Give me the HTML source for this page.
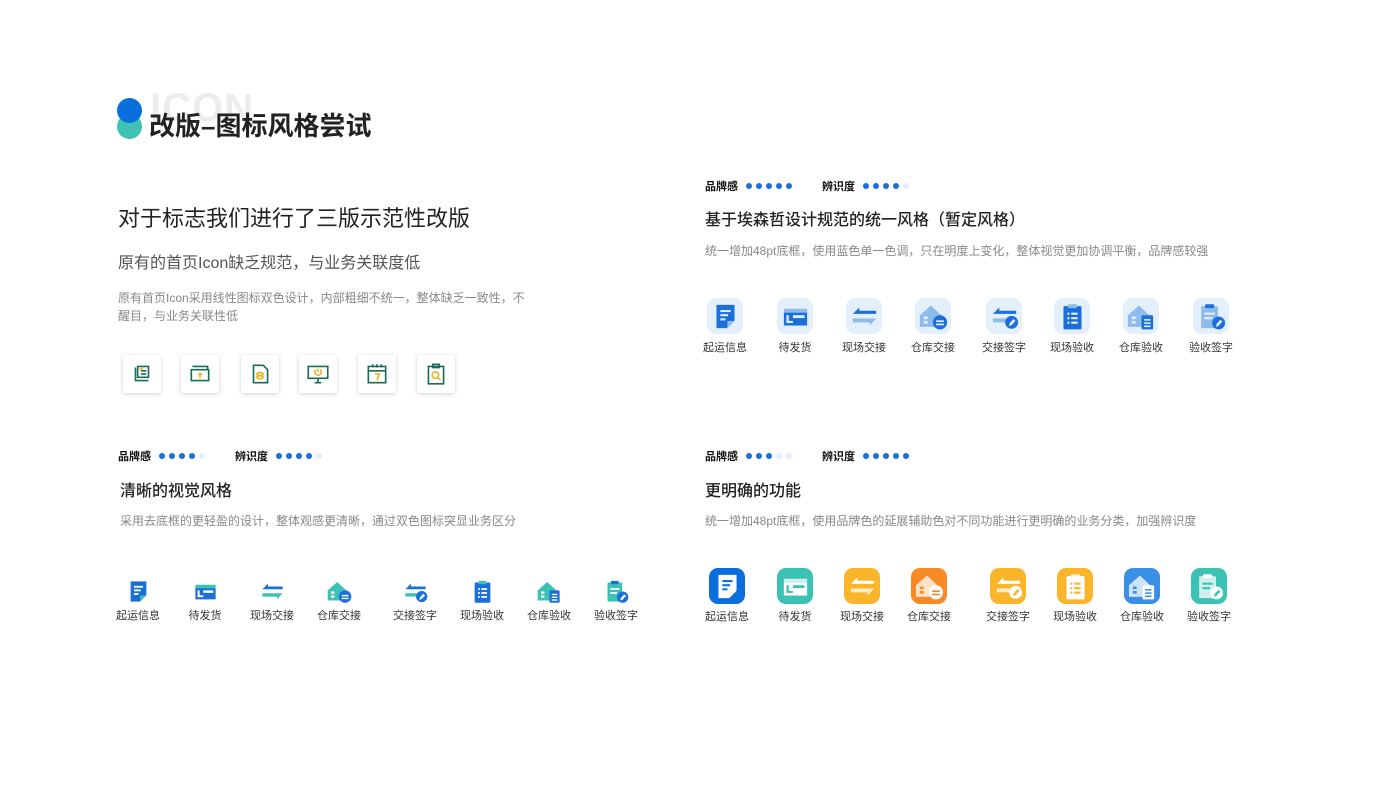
<!DOCTYPE html>
<html><head><meta charset="utf-8"><style>
*{margin:0;padding:0;box-sizing:border-box}
body{width:1400px;height:788px;background:#fff;position:relative;overflow:hidden;font-family:"Liberation Sans","Noto Sans CJK SC",sans-serif;color:#222}
.a{position:absolute;white-space:nowrap}
.p{fill:var(--p)}.s{fill:var(--s)}.w{fill:var(--w)}
.rate{font-size:11px;font-weight:bold;color:#111}
.dots{display:inline-block;vertical-align:middle;margin-left:8px;margin-top:-3px}
.dots i{display:inline-block;width:6px;height:6px;border-radius:50%;background:#1a6fd8;margin-right:4px}
.dots i.o{background:#e3eefa}
.h2{font-size:16px;font-weight:500;color:#222}
.desc{font-size:12px;color:#888}
.ic{position:absolute;text-align:center;width:70px;font-size:11px;color:#333}
.ic .bx{margin:0 auto;border-radius:9px;display:flex;align-items:center;justify-content:center}
.t1 .bx{width:36px;height:36px;background:#e3f0fb;--p:#1a6fd8;--s:#8dbbec;--w:#e3f0fb}
.t1 .bx svg{width:31px;height:31px;flex:none}
.t2 .bx{width:26px;height:26px;--p:#1a6fd8;--s:#3cc2b4;--w:#fff}
.t2 .bx svg{width:27px;height:27px;flex:none}
.t3 .bx{width:36px;height:36px;--p:#fff;--s:rgba(255,255,255,.75)}
.t3 .bx svg{width:31px;height:31px;flex:none}
.old{position:absolute;top:355px;width:38px;height:38px;background:#fff;box-shadow:0 1px 4px rgba(0,0,0,.18);border-radius:2px;display:flex;align-items:center;justify-content:center}
.old svg{width:26px;height:26px;fill:none;stroke:#1b6b5a;stroke-width:1.5}
</style></head><body>

<div class="a" style="left:150px;top:88px;font-size:40px;color:#ececec;font-weight:bold;letter-spacing:1px;line-height:40px">ICON</div>
<div class="a" style="left:117px;top:114px;width:25px;height:25px;border-radius:50%;background:#40c2b5"></div>
<div class="a" style="left:117px;top:98px;width:25px;height:25px;border-radius:50%;background:#0a6fdc"></div>
<div class="a" style="left:149px;top:110px;font-size:26px;font-weight:bold;color:#222;line-height:32px">改版–图标风格尝试</div>

<div class="a" style="left:118px;top:204px;font-size:22px;color:#222;line-height:30px">对于标志我们进行了三版示范性改版</div>
<div class="a" style="left:118px;top:253px;font-size:16px;color:#555;line-height:22px">原有的首页Icon缺乏规范，与业务关联度低</div>
<div class="a desc" style="left:118px;top:289px;line-height:18px">原有首页Icon采用线性图标双色设计，内部粗细不统一，整体缺乏一致性，不<br>醒目，与业务关联性低</div>

<div class="old" style="left:123px"><svg viewBox="0 0 24 24"><path d="M6 6v12h12M8 5h10v10H8z"/><path d="M11 9h5M11 12h5" /><path d="M10 7l1 1 2-2" stroke="#e6b821"/></svg></div>
<div class="old" style="left:181px"><svg viewBox="0 0 24 24"><path d="M4 8h16v10H4zM5 5h14v3"/><path d="M12 11v5M10 12h4" stroke="#e6b821"/></svg></div>
<div class="old" style="left:241px"><svg viewBox="0 0 24 24"><path d="M6 4h9l4 4v12H6z"/><ellipse cx="12" cy="12" rx="3" ry="1.3" stroke="#e6b821"/><ellipse cx="12" cy="15" rx="3" ry="1.3" stroke="#e6b821"/></svg></div>
<div class="old" style="left:299px"><svg viewBox="0 0 24 24"><path d="M3 5h18v11H3zM9 20h6M12 16v4"/><path d="M12 7v3M10 8a3 3 0 1 0 4 0" stroke="#e6b821"/></svg></div>
<div class="old" style="left:358px"><svg viewBox="0 0 24 24"><path d="M4 5h16v15H4zM4 9h16M8 3v3M12 3v3M16 3v3"/><path d="M10 12h4l-2 6" stroke="#e6b821"/></svg></div>
<div class="old" style="left:417px"><svg viewBox="0 0 24 24"><path d="M5 5h14v16H5zM9 3h6v3H9z"/><circle cx="11.5" cy="13" r="3" stroke="#e6b821"/><path d="M14 15.5l2 2" stroke="#e6b821"/></svg></div>

<div class="a rate" style="left:705px;top:178px">品牌感<span class="dots"><i></i><i></i><i></i><i></i><i></i></span></div>
<div class="a rate" style="left:822px;top:178px">辨识度<span class="dots"><i></i><i></i><i></i><i></i><i class="o"></i></span></div>
<div class="a h2" style="left:705px;top:206px">基于埃森哲设计规范的统一风格（暂定风格）</div>
<div class="a desc" style="left:705px;top:242px">统一增加48pt底框，使用蓝色单一色调，只在明度上变化，整体视觉更加协调平衡，品牌感较强</div>

<div class="a rate" style="left:118px;top:448px">品牌感<span class="dots"><i></i><i></i><i></i><i></i><i class="o"></i></span></div>
<div class="a rate" style="left:235px;top:448px">辨识度<span class="dots"><i></i><i></i><i></i><i></i><i class="o"></i></span></div>
<div class="a h2" style="left:120px;top:477px">清晰的视觉风格</div>
<div class="a desc" style="left:120px;top:512px">采用去底框的更轻盈的设计，整体观感更清晰，通过双色图标突显业务区分</div>

<div class="a rate" style="left:705px;top:448px">品牌感<span class="dots"><i></i><i></i><i></i><i class="o"></i><i class="o"></i></span></div>
<div class="a rate" style="left:822px;top:448px">辨识度<span class="dots"><i></i><i></i><i></i><i></i><i></i></span></div>
<div class="a h2" style="left:705px;top:477px">更明确的功能</div>
<div class="a desc" style="left:705px;top:512px">统一增加48pt底框，使用品牌色的延展辅助色对不同功能进行更明确的业务分类，加强辨识度</div>

<svg width="0" height="0" style="position:absolute">
<defs>
<g id="i1"><path class="p" d="M5 3h14v12l-6 6H5z"/><path class="s" d="M13.5 21v-5.5H19z"/><rect class="w" x="8" y="7" width="8" height="1.6"/><rect class="w" x="8" y="10.2" width="6" height="1.6"/><rect class="w" x="8" y="13.4" width="4" height="1.6"/></g>
<g id="i2"><rect class="s" x="3" y="6" width="18" height="3"/><rect class="p" x="3" y="9" width="18" height="10"/><rect class="w" x="5" y="11" width="1.8" height="6"/><rect class="w" x="5" y="15.4" width="5" height="1.6"/><rect class="w" x="10" y="11" width="9" height="2.2"/></g>
<g id="i3"><path class="p" d="M3 10L8 5v2.5h13V10z"/><path class="s" d="M3 13.5h18L16 19v-2.5H3z"/></g>
<g id="i4"><path class="s" d="M1.5 11L10 3.5 18 11v9H1.5z"/><rect class="w" x="4.5" y="12" width="3" height="2"/><rect class="w" x="4.5" y="15.5" width="3" height="2"/><circle class="p" cx="17" cy="16.5" r="5.5"/><rect class="w" x="14" y="15" width="6" height="1.3"/><rect class="w" x="14" y="17.5" width="6" height="1.3"/></g>
<g id="i5"><path class="p" d="M3 10L8 5v2.5h13V10z"/><path class="s" d="M3 13.5h10v3H3z"/><circle class="p" cx="17.5" cy="16.5" r="5"/><path class="w" d="M15.5 19.5l.4-2.2 3-3.3 1.6 1.4-3 3.3z"/></g>
<g id="i6"><rect class="p" x="5" y="4" width="14" height="18" rx="1"/><rect class="s" x="8.5" y="2.5" width="7" height="3" rx=".8"/><rect class="w" x="8" y="9" width="1.6" height="1.6"/><rect class="w" x="11" y="9" width="5" height="1.6"/><rect class="w" x="8" y="12.5" width="1.6" height="1.6"/><rect class="w" x="11" y="12.5" width="5" height="1.6"/><rect class="w" x="8" y="16" width="1.6" height="1.6"/><rect class="w" x="11" y="16" width="5" height="1.6"/></g>
<g id="i7"><path class="s" d="M1.5 11L10 3.5 18 11v9H1.5z"/><rect class="w" x="4.5" y="12" width="3" height="2"/><rect class="w" x="4.5" y="15.5" width="3" height="2"/><rect class="p" x="12" y="11" width="9" height="11" rx="1"/><rect class="w" x="14" y="14" width="5" height="1.2"/><rect class="w" x="14" y="16.5" width="5" height="1.2"/><rect class="w" x="14" y="19" width="5" height="1.2"/></g>
<g id="i8"><rect class="s" x="4" y="4" width="13" height="17" rx="1"/><rect class="p" x="7" y="2.5" width="7" height="3" rx=".8"/><rect class="w" x="6.5" y="9" width="8" height="1.6"/><rect class="w" x="6.5" y="12.5" width="6" height="1.6"/><circle class="p" cx="17.5" cy="17" r="5"/><path class="w" d="M15.5 20l.4-2.2 3-3.3 1.6 1.4-3 3.3z"/></g>
</defs></svg>

<div class="ic t1" style="left:690px;top:298px"><div class="bx"><svg viewBox="0 0 24 24"><use href="#i1"/></svg></div><div style="margin-top:5px">起运信息</div></div>
<div class="ic t1" style="left:760px;top:298px"><div class="bx"><svg viewBox="0 0 24 24"><use href="#i2"/></svg></div><div style="margin-top:5px">待发货</div></div>
<div class="ic t1" style="left:829px;top:298px"><div class="bx"><svg viewBox="0 0 24 24"><use href="#i3"/></svg></div><div style="margin-top:5px">现场交接</div></div>
<div class="ic t1" style="left:898px;top:298px"><div class="bx"><svg viewBox="0 0 24 24"><use href="#i4"/></svg></div><div style="margin-top:5px">仓库交接</div></div>
<div class="ic t1" style="left:969px;top:298px"><div class="bx"><svg viewBox="0 0 24 24"><use href="#i5"/></svg></div><div style="margin-top:5px">交接签字</div></div>
<div class="ic t1" style="left:1037px;top:298px"><div class="bx"><svg viewBox="0 0 24 24"><use href="#i6"/></svg></div><div style="margin-top:5px">现场验收</div></div>
<div class="ic t1" style="left:1106px;top:298px"><div class="bx"><svg viewBox="0 0 24 24"><use href="#i7"/></svg></div><div style="margin-top:5px">仓库验收</div></div>
<div class="ic t1" style="left:1176px;top:298px"><div class="bx"><svg viewBox="0 0 24 24"><use href="#i8"/></svg></div><div style="margin-top:5px">验收签字</div></div>

<div class="ic t2" style="left:103px;top:578px"><div class="bx"><svg viewBox="0 0 24 24"><use href="#i1"/></svg></div><div style="margin-top:3px">起运信息</div></div>
<div class="ic t2" style="left:170px;top:578px"><div class="bx"><svg viewBox="0 0 24 24"><use href="#i2"/></svg></div><div style="margin-top:3px">待发货</div></div>
<div class="ic t2" style="left:237px;top:578px"><div class="bx"><svg viewBox="0 0 24 24"><use href="#i3"/></svg></div><div style="margin-top:3px">现场交接</div></div>
<div class="ic t2" style="left:304px;top:578px"><div class="bx"><svg viewBox="0 0 24 24"><use href="#i4"/></svg></div><div style="margin-top:3px">仓库交接</div></div>
<div class="ic t2" style="left:380px;top:578px"><div class="bx"><svg viewBox="0 0 24 24"><use href="#i5"/></svg></div><div style="margin-top:3px">交接签字</div></div>
<div class="ic t2" style="left:447px;top:578px"><div class="bx"><svg viewBox="0 0 24 24"><use href="#i6"/></svg></div><div style="margin-top:3px">现场验收</div></div>
<div class="ic t2" style="left:514px;top:578px"><div class="bx"><svg viewBox="0 0 24 24"><use href="#i7"/></svg></div><div style="margin-top:3px">仓库验收</div></div>
<div class="ic t2" style="left:581px;top:578px"><div class="bx"><svg viewBox="0 0 24 24"><use href="#i8"/></svg></div><div style="margin-top:3px">验收签字</div></div>

<div class="ic t3" style="left:692px;top:568px"><div class="bx" style="background:#0a6fdc;--w:#0a6fdc"><svg viewBox="0 0 24 24"><use href="#i1"/></svg></div><div style="margin-top:4px">起运信息</div></div>
<div class="ic t3" style="left:760px;top:568px"><div class="bx" style="background:#3cc2b4;--w:#3cc2b4"><svg viewBox="0 0 24 24"><use href="#i2"/></svg></div><div style="margin-top:4px">待发货</div></div>
<div class="ic t3" style="left:827px;top:568px"><div class="bx" style="background:#fbb52a;--w:#fbb52a"><svg viewBox="0 0 24 24"><use href="#i3"/></svg></div><div style="margin-top:4px">现场交接</div></div>
<div class="ic t3" style="left:894px;top:568px"><div class="bx" style="background:#f88a26;--w:#f88a26"><svg viewBox="0 0 24 24"><use href="#i4"/></svg></div><div style="margin-top:4px">仓库交接</div></div>
<div class="ic t3" style="left:973px;top:568px"><div class="bx" style="background:#fbb52a;--w:#fbb52a"><svg viewBox="0 0 24 24"><use href="#i5"/></svg></div><div style="margin-top:4px">交接签字</div></div>
<div class="ic t3" style="left:1040px;top:568px"><div class="bx" style="background:#fbb52a;--w:#fbb52a"><svg viewBox="0 0 24 24"><use href="#i6"/></svg></div><div style="margin-top:4px">现场验收</div></div>
<div class="ic t3" style="left:1107px;top:568px"><div class="bx" style="background:#3a8fe6;--w:#3a8fe6"><svg viewBox="0 0 24 24"><use href="#i7"/></svg></div><div style="margin-top:4px">仓库验收</div></div>
<div class="ic t3" style="left:1174px;top:568px"><div class="bx" style="background:#3cc2b4;--w:#3cc2b4"><svg viewBox="0 0 24 24"><use href="#i8"/></svg></div><div style="margin-top:4px">验收签字</div></div>

</body></html>
